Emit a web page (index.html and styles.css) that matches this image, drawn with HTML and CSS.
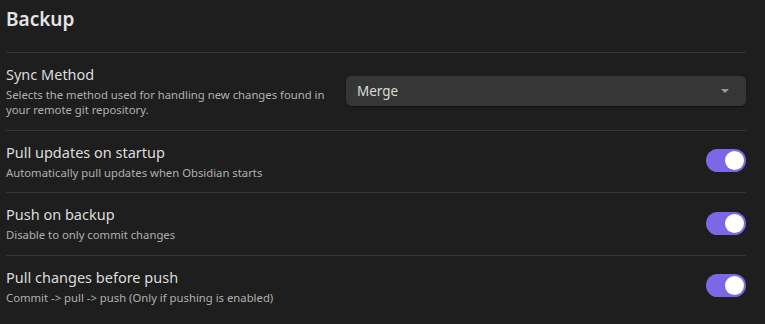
FILE: index.html
```html
<!DOCTYPE html>
<html lang="en">
<head>
    <meta charset="UTF-8">
    <meta name="viewport" content="width=device-width, initial-scale=1.0">
    <title>Backup</title>
    <link rel="stylesheet" href="styles.css">
</head>
<body>
    <div class="settings">
        <h3 class="settings-heading">Backup</h3>

        <div class="setting-item">
            <div class="setting-info">
                <div class="setting-name">Sync Method</div>
                <div class="setting-desc">Selects the method used for handling new changes found in your remote git repository.</div>
            </div>
            <div class="setting-control">
                <div class="dropdown">
                    <span>Merge</span>
                    <span class="dropdown-arrow"></span>
                </div>
            </div>
        </div>

        <div class="setting-item">
            <div class="setting-info">
                <div class="setting-name">Pull updates on startup</div>
                <div class="setting-desc">Automatically pull updates when Obsidian starts</div>
            </div>
            <div class="setting-control">
                <div class="toggle is-enabled"><span class="knob"></span></div>
            </div>
        </div>

        <div class="setting-item">
            <div class="setting-info">
                <div class="setting-name">Push on backup</div>
                <div class="setting-desc">Disable to only commit changes</div>
            </div>
            <div class="setting-control">
                <div class="toggle is-enabled"><span class="knob"></span></div>
            </div>
        </div>

        <div class="setting-item">
            <div class="setting-info">
                <div class="setting-name">Pull changes before push</div>
                <div class="setting-desc">Commit -&gt; pull -&gt; push (Only if pushing is enabled)</div>
            </div>
            <div class="setting-control">
                <div class="toggle is-enabled"><span class="knob"></span></div>
            </div>
        </div>
    </div>
</body>
</html>
```

FILE: styles.css
```css
body {
    margin: 0;
    background-color: #1e1e1e;
    color: #dadada;
    font-family: "Noto Sans", "Open Sans", sans-serif;
}
.settings {
    width: 740px;
    padding: 0 0 0 6px;
}
.settings-heading {
    margin: 0;
    padding: 5px 0 0;
    height: 52px;
    box-sizing: border-box;
    font-size: 19px;
    line-height: 28px;
    font-weight: 600;
    color: #e4e4e4;
}
.setting-item {
    display: flex;
    align-items: center;
    border-top: 1px solid #353535;
    padding: 11px 0 12.5px;
}
.setting-info {
    flex: 1;
    padding-right: 20px;
}
.setting-name {
    font-size: 14.5px;
    line-height: 20px;
    margin-bottom: 3px;
    color: #dcdcdc;
}
.setting-desc {
    font-size: 11.3px;
    line-height: 15px;
    color: #b0b0b0;
    max-width: 322px;
}
.setting-control {
    display: flex;
    justify-content: flex-end;
}
.dropdown {
    width: 400px;
    height: 30px;
    box-sizing: border-box;
    padding: 0 11px;
    display: flex;
    align-items: center;
    justify-content: space-between;
    background-color: #363636;
    border-radius: 5px;
    box-shadow: 0 1px 2px rgba(0,0,0,0.5);
    font-size: 13.5px;
    color: #dcdcdc;
}
.dropdown-arrow {
    width: 0;
    height: 0;
    border-left: 4px solid transparent;
    border-right: 4px solid transparent;
    border-top: 4px solid #9a9a9a;
    margin-right: 6px;
}
.toggle {
    width: 40px;
    height: 23px;
    border-radius: 12px;
    background-color: #7b68e6;
    position: relative;
}
.toggle .knob {
    position: absolute;
    top: 2px;
    right: 2px;
    width: 19px;
    height: 19px;
    border-radius: 50%;
    background-color: #fff;
}
```
